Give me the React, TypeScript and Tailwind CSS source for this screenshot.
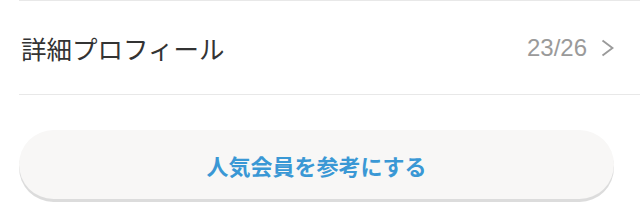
export default function App() {
  return (
    <div className="w-[640px] h-[211px] bg-white pl-[19px] font-['Noto_Sans_CJK_JP',sans-serif]">
      {/* Profile row */}
      <div className="flex h-[95px] items-center justify-between border-y border-[#e8e8e8] pr-[26px]">
        <span className="pl-[2px] text-[25.5px] leading-none text-[#333333]">詳細プロフィール</span>
        <div className="flex items-center gap-[14px] text-[#9a9a9a]">
          <span className="font-['Liberation_Sans',sans-serif] text-[24px] leading-none">23/26</span>
          <svg width="13" height="18" viewBox="0 0 13 18" fill="none" stroke="currentColor" strokeWidth={1.9}>
            <path d="M1.5 1.5l10 7.5l-10 7.5" />
          </svg>
        </div>
      </div>

      {/* Button */}
      <div className="pt-[35px]">
        <button className="flex h-[69px] w-[595px] items-center justify-center rounded-full bg-[#f8f7f6] shadow-[0_3px_0_#dcdcdc] text-[22px] font-bold leading-none text-[#3a98d5]">
          人気会員を参考にする
        </button>
      </div>
    </div>
  )
}
